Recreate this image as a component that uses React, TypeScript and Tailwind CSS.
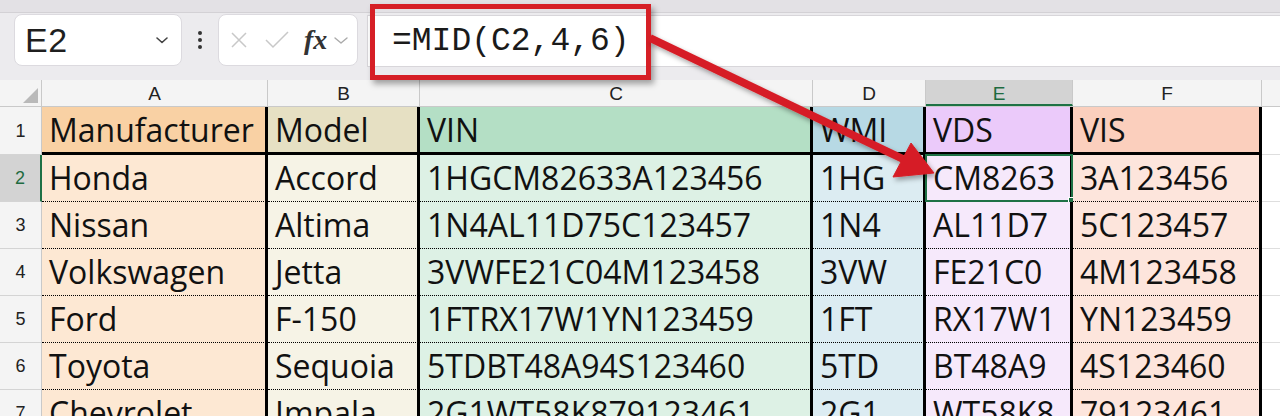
import React from "react";

type Col = { key: string; head: string; body: string };

const cols: Col[] = [
  { key: "A", head: "bg-[#f9d1a4]", body: "bg-[#fde8d3]" },
  { key: "B", head: "bg-[#e6e0c3]", body: "bg-[#f6f3e6]" },
  { key: "C", head: "bg-[#b4dfc5]", body: "bg-[#ddf1e5]" },
  { key: "D", head: "bg-[#b7d9e4]", body: "bg-[#dcecf2]" },
  { key: "E", head: "bg-[#ebcafa]", body: "bg-[#f6e9fb]" },
  { key: "F", head: "bg-[#fbcfbd]", body: "bg-[#fde5dc]" },
];

const rows: string[][] = [
  ["Manufacturer", "Model", "VIN", "WMI", "VDS", "VIS"],
  ["Honda", "Accord", "1HGCM82633A123456", "1HG", "CM8263", "3A123456"],
  ["Nissan", "Altima", "1N4AL11D75C123457", "1N4", "AL11D7", "5C123457"],
  ["Volkswagen", "Jetta", "3VWFE21C04M123458", "3VW", "FE21C0", "4M123458"],
  ["Ford", "F-150", "1FTRX17W1YN123459", "1FT", "RX17W1", "YN123459"],
  ["Toyota", "Sequoia", "5TDBT48A94S123460", "5TD", "BT48A9", "4S123460"],
  ["Chevrolet", "Impala", "2G1WT58K879123461", "2G1", "WT58K8", "79123461"],
];

const Chevron = () => (
  <svg width="14" height="10" viewBox="0 0 14 10" fill="none">
    <path d="M2 3l5 4.5L12 3" stroke="#444" strokeWidth="1.6" strokeLinecap="round" strokeLinejoin="round" />
  </svg>
);

const FormulaBar = () => (
  <div className="h-[67px] bg-[#ecebee] flex items-start">
    {/* name box */}
    <div className="ml-[14px] mt-px w-[168px] h-[52px] bg-white rounded-[8px] border border-[#dcdadf] flex items-center justify-between pl-[10px] pr-[12px]">
      <span className="font-['Liberation_Sans'] text-[34px] leading-none text-[#1f1f1f] tracking-[0.5px]">E2</span>
      <Chevron />
    </div>
    {/* vertical dots */}
    <div className="w-[36px] h-[52px] mt-px flex flex-col items-center justify-center gap-[3px]">
      <span className="w-[4px] h-[4px] rounded-full bg-[#333]" />
      <span className="w-[4px] h-[4px] rounded-full bg-[#333]" />
      <span className="w-[4px] h-[4px] rounded-full bg-[#333]" />
    </div>
    {/* fx box */}
    <div className="mt-px w-[140px] h-[52px] bg-white rounded-[8px] border border-[#dcdadf] flex items-center pl-[11px]">
      <svg width="18" height="18" viewBox="0 0 18 18" fill="none">
        <path d="M2 2l14 14M16 2L2 16" stroke="#c8c8c8" strokeWidth="1.5" />
      </svg>
      <svg className="ml-[16px]" width="26" height="20" viewBox="0 0 26 20" fill="none">
        <path d="M2 10l7 7L24 2" stroke="#c8c8c8" strokeWidth="1.5" />
      </svg>
      <span className="ml-[14px] font-['Liberation_Serif'] italic font-bold text-[28px] leading-none text-[#333]">fx</span>
      <svg className="ml-[6px]" width="16" height="10" viewBox="0 0 16 10" fill="none">
        <path d="M2 3l6 5 6-5" stroke="#aaa" strokeWidth="1.4" strokeLinecap="round" strokeLinejoin="round" />
      </svg>
    </div>
    {/* formula input */}
    <div className="ml-[9px] mt-[2px] flex-1 h-[52px] bg-white border-y border-l border-[#d8d6da] flex items-center pl-[24px]">
      <span className="font-['Liberation_Mono'] text-[33px] leading-none text-[#1a1a1a]">=MID(C2,4,6)</span>
    </div>
  </div>
);

const Grid = () => {
  const gridCols = "grid grid-cols-[42px_226px_152px_393px_113px_147px_189px_1fr]";
  return (
    <div className="font-['Open_Sans'] text-[#111]">
      {/* column headers */}
      <div className={`${gridCols} h-[27px] bg-[#f4f4f4] border-b border-[#c9c9c9]`}>
        <div className="relative border-r border-[#c9c9c9]">
          <svg className="absolute right-[3px] bottom-[3px]" width="15" height="15" viewBox="0 0 15 15">
            <path d="M15 0V15H0Z" fill="#b9b9b9" />
          </svg>
        </div>
        {cols.map((c) =>
          c.key === "E" ? (
            <div
              key={c.key}
              className="bg-[#d3d3d3] border-r border-[#c9c9c9] border-b-2 border-b-[#1e7145] flex items-center justify-center font-['Liberation_Sans'] text-[19px] text-[#1e6b40] leading-none pt-[2px]"
            >
              {c.key}
            </div>
          ) : (
            <div
              key={c.key}
              className="border-r border-[#c9c9c9] flex items-center justify-center font-['Liberation_Sans'] text-[19px] text-[#222] leading-none"
            >
              {c.key}
            </div>
          )
        )}
        <div />
      </div>

      {rows.map((r, ri) => {
        const isHead = ri === 0;
        const selectedRow = ri === 1;
        return (
          <div key={ri} className={`${gridCols} ${isHead ? "h-[48px]" : "h-[47px]"}`}>
            <div
              className={`flex items-center justify-center font-['Liberation_Sans'] text-[18px] leading-none border-b border-[#d4d4d4] ${
                selectedRow
                  ? "bg-[#d3d3d3] text-[#1e6b40] border-r-2 border-r-[#1e7145]"
                  : "bg-[#f4f4f4] text-[#222] border-r border-r-[#c9c9c9]"
              }`}
            >
              {ri + 1}
            </div>
            {r.map((text, ci) => {
              const c = cols[ci];
              const bottom = isHead
                ? "border-b-[3px] border-b-black"
                : "border-b border-b-black [border-bottom-style:dotted]";
              const selected = selectedRow && ci === 4;
              return (
                <div
                  key={ci}
                  className={`relative ${isHead ? c.head : c.body} border-r-[3px] border-r-black ${bottom} pl-[7px] text-[32px] leading-[45px] whitespace-nowrap`}
                >
                  {text}
                  {selected && (
                    <>
                      <div className="absolute -left-px -top-px -right-[3px] -bottom-px border-2 border-[#1e7145]" />
                      <div className="absolute -right-[7px] -bottom-[5px] w-[9px] h-[9px] bg-[#1e7145] border border-white" />
                    </>
                  )}
                </div>
              );
            })}
            <div className="bg-white border-b border-[#dedede]" />
          </div>
        );
      })}
    </div>
  );
};

export default function App() {
  return (
    <div className="relative w-[1280px] h-[416px] overflow-hidden bg-white">
      <div className="h-[13px] bg-[#e3e1e5] border-b border-[#d3d1d5]" />
      <FormulaBar />
      <Grid />

      {/* annotation: red box around the formula */}
      <div className="absolute left-[370px] top-[4px] w-[281px] h-[76px] border-[5px] border-[#d61f26] shadow-[3px_4px_6px_rgba(0,0,0,0.35)]" />

      {/* annotation: arrow to E2 */}
      <svg className="absolute left-0 top-0 pointer-events-none" width="1280" height="416" viewBox="0 0 1280 416">
        <defs>
          <filter id="sh" x="-10%" y="-10%" width="120%" height="130%">
            <feDropShadow dx="2" dy="3" stdDeviation="2.5" floodColor="#000" floodOpacity="0.35" />
          </filter>
        </defs>
        <g filter="url(#sh)" fill="#d61f26" stroke="#d61f26">
          <line x1="650" y1="38" x2="905" y2="160" strokeWidth="8" />
          <polygon points="934,173 893,177 911,143" strokeWidth="1" />
        </g>
      </svg>
    </div>
  );
}
